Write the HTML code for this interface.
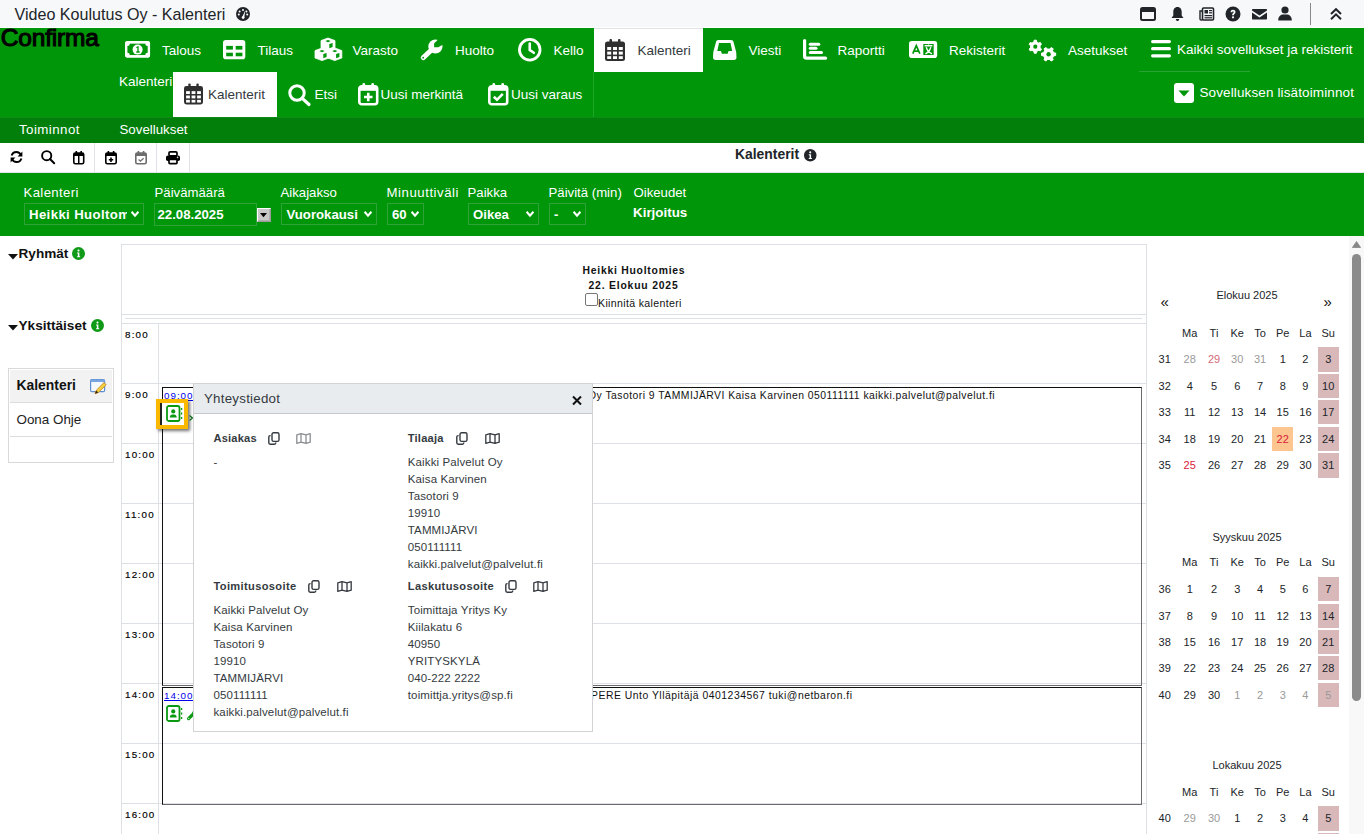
<!DOCTYPE html>
<html><head><meta charset="utf-8">
<style>
*{box-sizing:border-box;margin:0;padding:0}
html,body{width:1364px;height:834px;overflow:hidden;background:#fff;font-family:"Liberation Sans",sans-serif;color:#222;position:relative}
.a{position:absolute;white-space:nowrap}
svg.a{overflow:visible}
</style></head><body>
<div class="a" style="left:0px;top:0px;width:1364px;height:27px;background:#f7f8fa"></div>
<div class="a" style="left:0px;top:27px;width:1364px;height:1px;background:#fff"></div>
<div class="a" style="left:14.50px;top:6.37px;font-size:16.1px;line-height:16.1px;color:#212529;">Video Koulutus Oy - Kalenteri</div>
<svg class="a" style="left:236px;top:7px;" width="14" height="14" viewBox="0 0 14 14"><circle cx="7" cy="7" r="7" fill="#212529"/><circle cx="7" cy="3" r="1" fill="#fff"/><circle cx="3.6" cy="4.6" r="1" fill="#fff"/><circle cx="2.8" cy="7.6" r="1" fill="#fff"/><circle cx="11.2" cy="7.6" r="1" fill="#fff"/><circle cx="10.4" cy="4.6" r="1" fill="#fff"/><path d="M6 10.5 L9.2 3.6 L8.2 11 Z" fill="#fff"/><circle cx="7.1" cy="10.6" r="1.4" fill="#fff"/></svg>
<svg class="a" style="left:1140px;top:7px;" width="16" height="14" viewBox="0 0 16 14"><rect x="1" y="1" width="14" height="12" rx="1.5" fill="none" stroke="#212529" stroke-width="2"/><rect x="1" y="1" width="14" height="4" fill="#212529"/></svg>
<svg class="a" style="left:1171px;top:6px;" width="13" height="16" viewBox="0 0 13 16"><path d="M6.5 1 C3.5 1 2.3 3.5 2.3 6 L2.3 9.5 L0.5 12 L12.5 12 L10.7 9.5 L10.7 6 C10.7 3.5 9.5 1 6.5 1Z" fill="#212529"/><path d="M4.8 13 L8.2 13 C8 14.4 7.3 15 6.5 15 C5.7 15 5 14.4 4.8 13Z" fill="#212529"/></svg>
<svg class="a" style="left:1199px;top:7px;" width="15" height="14" viewBox="0 0 15 14"><rect x="3.5" y="1" width="11" height="12" rx="1" fill="none" stroke="#212529" stroke-width="1.6"/><path d="M3.5 4 L1 4 L1 12 C1 12.8 1.6 13 2.2 13 L3.5 13" fill="none" stroke="#212529" stroke-width="1.4"/><rect x="5.5" y="3" width="3.5" height="3.5" fill="#212529"/><rect x="10" y="3" width="3" height="1.2" fill="#212529"/><rect x="10" y="5.2" width="3" height="1.2" fill="#212529"/><rect x="5.5" y="8" width="7.5" height="1.2" fill="#212529"/><rect x="5.5" y="10.2" width="7.5" height="1.2" fill="#212529"/></svg>
<svg class="a" style="left:1225px;top:6px;" width="16" height="16" viewBox="0 0 16 16"><circle cx="8" cy="8" r="7.5" fill="#212529"/><path d="M5.6 6.2 C5.6 4.6 6.7 3.8 8 3.8 C9.4 3.8 10.5 4.7 10.5 6 C10.5 7.6 8.9 7.8 8.9 9.2 L7.1 9.2 C7.1 7.2 8.6 7.1 8.6 6.1 C8.6 5.6 8.3 5.3 8 5.3 C7.6 5.3 7.3 5.6 7.3 6.2Z" fill="#fff"/><circle cx="8" cy="11.3" r="1.1" fill="#fff"/></svg>
<svg class="a" style="left:1252px;top:8px;" width="15" height="12" viewBox="0 0 15 12"><path d="M1 1 L14 1 C14.6 1 15 1.4 15 2 L15 2.6 L7.5 7.4 L0 2.6 L0 2 C0 1.4 0.4 1 1 1Z" fill="#212529"/><path d="M0 4.6 L7.5 9.4 L15 4.6 L15 10.6 C15 11.2 14.6 11.6 14 11.6 L1 11.6 C0.4 11.6 0 11.2 0 10.6Z" fill="#212529"/></svg>
<svg class="a" style="left:1278px;top:6px;" width="14" height="15" viewBox="0 0 14 15"><circle cx="7" cy="4" r="3.6" fill="#212529"/><path d="M0.2 14.5 C0.2 10.6 2.8 8.6 5.2 8.6 L8.8 8.6 C11.2 8.6 13.8 10.6 13.8 14.5Z" fill="#212529"/></svg>
<div class="a" style="left:1310px;top:3px;width:1px;height:22px;background:#888"></div>
<svg class="a" style="left:1329px;top:7px;" width="14" height="14" viewBox="0 0 14 14"><path d="M2 7 L7 2.2 L12 7 M2 12.2 L7 7.4 L12 12.2" fill="none" stroke="#212529" stroke-width="2"/></svg>
<div class="a" style="left:0px;top:28px;width:1364px;height:89px;background:#009609"></div>
<div class="a" style="left:593px;top:72px;width:1px;height:45px;background:#22a42a"></div>
<div class="a" style="left:1139px;top:71px;width:111px;height:1px;background:#2aa332"></div>
<div class="a" style="left:594px;top:28px;width:109px;height:44px;background:#fff;border-top:1px solid #dfe3e8"></div>
<div class="a" style="left:173px;top:72px;width:104px;height:45px;background:#fff"></div>
<div class="a" style="left:162.00px;top:44.37px;font-size:13.5px;line-height:13.5px;color:#fff;">Talous</div>
<div class="a" style="left:257.50px;top:44.37px;font-size:13.5px;line-height:13.5px;color:#fff;">Tilaus</div>
<div class="a" style="left:352.50px;top:44.37px;font-size:13.5px;line-height:13.5px;color:#fff;">Varasto</div>
<div class="a" style="left:455.00px;top:44.37px;font-size:13.5px;line-height:13.5px;color:#fff;">Huolto</div>
<div class="a" style="left:553.50px;top:44.37px;font-size:13.5px;line-height:13.5px;color:#fff;">Kello</div>
<div class="a" style="left:637.50px;top:44.37px;font-size:13.5px;line-height:13.5px;color:#343a40;">Kalenteri</div>
<div class="a" style="left:748.50px;top:44.37px;font-size:13.5px;line-height:13.5px;color:#fff;">Viesti</div>
<div class="a" style="left:837.50px;top:44.37px;font-size:13.5px;line-height:13.5px;color:#fff;">Raportti</div>
<div class="a" style="left:949.00px;top:44.37px;font-size:13.5px;line-height:13.5px;color:#fff;">Rekisterit</div>
<div class="a" style="left:1068.00px;top:44.37px;font-size:13.5px;line-height:13.5px;color:#fff;">Asetukset</div>
<div class="a" style="left:1177.00px;top:42.57px;font-size:13.5px;line-height:13.5px;color:#fff;">Kaikki sovellukset ja rekisterit</div>
<div class="a" style="left:119.00px;top:74.87px;font-size:13.5px;line-height:13.5px;color:#fff;">Kalenteri</div>
<div class="a" style="left:208.00px;top:87.97px;font-size:13.5px;line-height:13.5px;color:#343a40;">Kalenterit</div>
<div class="a" style="left:314.50px;top:88.17px;font-size:13.5px;line-height:13.5px;color:#fff;">Etsi</div>
<div class="a" style="left:380.50px;top:88.17px;font-size:13.5px;line-height:13.5px;color:#fff;">Uusi merkintä</div>
<div class="a" style="left:511.00px;top:88.17px;font-size:13.5px;line-height:13.5px;color:#fff;">Uusi varaus</div>
<div class="a" style="left:1199.50px;top:86.07px;font-size:13.5px;line-height:13.5px;color:#fff;letter-spacing:0.12px;">Sovelluksen lisätoiminnot</div>
<svg class="a" style="left:124.7px;top:41.1px;" width="25.1" height="16.7" viewBox="0 0 25.1 16.7"><rect x="0" y="0" width="25.1" height="16.7" rx="2.6" fill="#fff"/><rect x="2.4" y="2.65" width="20.3" height="11.4" fill="#009609"/><circle cx="2.4" cy="2.65" r="2.4" fill="#fff"/><circle cx="22.7" cy="2.65" r="2.4" fill="#fff"/><circle cx="2.4" cy="14.05" r="2.4" fill="#fff"/><circle cx="22.7" cy="14.05" r="2.4" fill="#fff"/><circle cx="12.6" cy="8.6" r="5" fill="#fff"/><path d="M11.4 6.6 L13 5.9 L13 11 M11.3 11 L14.7 11" stroke="#009609" stroke-width="1.3" fill="none"/></svg>
<svg class="a" style="left:222.8px;top:40.1px;" width="22.3" height="19.3" viewBox="0 0 22.3 19.3"><rect x="0" y="0" width="22.3" height="19.3" rx="2.8" fill="#fff"/><rect x="3.2" y="5.9" width="6.7" height="3.7" fill="#009609"/><rect x="12.7" y="5.9" width="6.7" height="3.7" fill="#009609"/><rect x="3.2" y="12.7" width="6.7" height="3.6" fill="#009609"/><rect x="12.7" y="12.7" width="6.7" height="3.6" fill="#009609"/></svg>
<svg class="a" style="left:315px;top:38.3px;" width="27" height="23" viewBox="0 0 27 23"><g transform="translate(6,0)"><path d="M0 2.6 L7 0 L14 2.6 L14 10 L7 12.6 L0 10Z" fill="#fff" stroke="#fff" stroke-width="0.8" stroke-linejoin="round"/><path d="M4.3 3.1 L7 2 L9.7 3.1 L7 4.2Z" fill="#009609"/><path d="M8.3 6.1 L11.6 4.9 L11.6 9 L8.3 10.2Z" fill="#009609"/></g><g transform="translate(0,10)"><path d="M0 2.6 L7 0 L14 2.6 L14 10 L7 12.6 L0 10Z" fill="#fff" stroke="#fff" stroke-width="0.8" stroke-linejoin="round"/><path d="M4.3 3.1 L7 2 L9.7 3.1 L7 4.2Z" fill="#009609"/><path d="M8.3 6.1 L11.6 4.9 L11.6 9 L8.3 10.2Z" fill="#009609"/></g><g transform="translate(12.8,10)"><path d="M0 2.6 L7 0 L14 2.6 L14 10 L7 12.6 L0 10Z" fill="#fff" stroke="#fff" stroke-width="0.8" stroke-linejoin="round"/><path d="M4.3 3.1 L7 2 L9.7 3.1 L7 4.2Z" fill="#009609"/><path d="M8.3 6.1 L11.6 4.9 L11.6 9 L8.3 10.2Z" fill="#009609"/></g></svg>
<svg class="a" style="left:420px;top:38.5px;" width="23" height="22" viewBox="0 0 23 22"><circle cx="15.4" cy="7.5" r="7.1" fill="#fff"/><path d="M3.3 18.6 L12.5 10" stroke="#fff" stroke-width="5" stroke-linecap="round"/><path d="M14.1 8.2 L14.1 4.6 L18.8 -0.2 L24 -0.2 L24 5 L18.2 8.2Z" fill="#009609"/><circle cx="3.2" cy="18.7" r="0.9" fill="#009609"/></svg>
<svg class="a" style="left:518px;top:38px;" width="23.5" height="23.5" viewBox="0 0 23.5 23.5"><circle cx="11.75" cy="11.75" r="10.3" fill="none" stroke="#fff" stroke-width="2.8"/><path d="M11.75 5.5 L11.75 12 L15.8 14.8" fill="none" stroke="#fff" stroke-width="2.6" stroke-linecap="round"/></svg>
<svg class="a" style="left:605px;top:39px;preserveAspectRatio:none" width="20" height="22" viewBox="0 0 20 22"><rect x="4.5" y="0" width="2.5" height="4" rx="1" fill="#303030"/><rect x="13" y="0" width="2.5" height="4" rx="1" fill="#303030"/><rect x="0" y="2.5" width="20" height="19.5" rx="2.5" fill="#303030"/><g fill="#fff"><rect x="2.2" y="8" width="4" height="3"/><rect x="8" y="8" width="4" height="3"/><rect x="13.8" y="8" width="4" height="3"/><rect x="2.2" y="12.6" width="4" height="3"/><rect x="8" y="12.6" width="4" height="3"/><rect x="13.8" y="12.6" width="4" height="3"/><rect x="2.2" y="17.2" width="4" height="2.8"/><rect x="8" y="17.2" width="4" height="2.8"/><rect x="13.8" y="17.2" width="4" height="2.8"/></g></svg>
<svg class="a" style="left:184px;top:83px;preserveAspectRatio:none" width="19" height="22" viewBox="0 0 20 22"><rect x="4.5" y="0" width="2.5" height="4" rx="1" fill="#303030"/><rect x="13" y="0" width="2.5" height="4" rx="1" fill="#303030"/><rect x="0" y="2.5" width="20" height="19.5" rx="2.5" fill="#303030"/><g fill="#fff"><rect x="2.2" y="8" width="4" height="3"/><rect x="8" y="8" width="4" height="3"/><rect x="13.8" y="8" width="4" height="3"/><rect x="2.2" y="12.6" width="4" height="3"/><rect x="8" y="12.6" width="4" height="3"/><rect x="13.8" y="12.6" width="4" height="3"/><rect x="2.2" y="17.2" width="4" height="2.8"/><rect x="8" y="17.2" width="4" height="2.8"/><rect x="13.8" y="17.2" width="4" height="2.8"/></g></svg>
<svg class="a" style="left:713px;top:40px;" width="23.5" height="20" viewBox="0 0 23.5 20"><path d="M5.5 0 L18 0 C19.4 0 20.2 0.8 20.5 2 L23.2 12 L23.5 17.5 C23.5 18.9 22.4 20 21 20 L2.5 20 C1.1 20 0 18.9 0 17.5 L0.3 12 L3 2 C3.3 0.8 4.1 0 5.5 0Z" fill="#fff"/><path d="M6 3 L17.5 3 L19.2 11 L15.6 11 L14.6 13.8 L8.9 13.8 L7.9 11 L4.3 11Z" fill="#009609"/></svg>
<svg class="a" style="left:802.5px;top:40px;" width="23" height="20" viewBox="0 0 23 20"><path d="M1.6 0.5 L1.6 16.2 C1.6 17.4 2.4 18.2 3.6 18.2 L22.5 18.2" fill="none" stroke="#fff" stroke-width="3.2" stroke-linecap="round" stroke-linejoin="round"/><rect x="5.8" y="2.8" width="11.5" height="3" rx="1.5" fill="#fff"/><rect x="5.8" y="6.8" width="8.7" height="3" rx="1.5" fill="#fff"/><rect x="5.8" y="11" width="14.2" height="3" rx="1.5" fill="#fff"/></svg>
<svg class="a" style="left:908.5px;top:41px;" width="28.2" height="17" viewBox="0 0 28.2 17"><rect x="0" y="0" width="28.2" height="17" rx="2.8" fill="#fff"/><path d="M3.8 12.6 L7.3 4.6 L10.8 12.6 M5.2 10.2 L9.4 10.2" stroke="#009609" stroke-width="1.7" fill="none"/><rect x="14.3" y="3" width="10.4" height="11" fill="#009609"/><path d="M15.6 4.8 L23.4 4.8 M19.5 3.6 L19.5 5 M21.8 6.2 C21 9.5 19.5 11.5 16.4 12.8 M17.3 6.2 C18 9.5 20 11.5 23 12.8" stroke="#fff" stroke-width="1.4" fill="none"/></svg>
<svg class="a" style="left:1027.5px;top:38.5px;" width="29" height="22" viewBox="0 0 29 22"><path d="M5.86 3.03 L6.18 1.20 L8.42 1.20 L8.74 3.03 L10.62 4.12 L12.38 3.48 L13.49 5.41 L12.06 6.62 L12.06 8.78 L13.49 9.99 L12.38 11.92 L10.62 11.28 L8.74 12.37 L8.42 14.20 L6.18 14.20 L5.86 12.37 L3.98 11.28 L2.22 11.92 L1.11 9.99 L2.54 8.78 L2.54 6.62 L1.11 5.41 L2.22 3.48 L3.98 4.12Z" fill="#fff" stroke="#fff" stroke-width="1" stroke-linejoin="round"/><circle cx="7.3" cy="7.7" r="4.8839999999999995" fill="#fff"/><circle cx="7.3" cy="7.7" r="2.1" fill="#009609"/><path d="M25.69 13.73 L27.70 14.08 L27.70 16.52 L25.69 16.87 L24.51 18.92 L25.20 20.84 L23.09 22.05 L21.78 20.50 L19.42 20.50 L18.11 22.05 L16.00 20.84 L16.69 18.92 L15.51 16.87 L13.50 16.52 L13.50 14.08 L15.51 13.73 L16.69 11.68 L16.00 9.76 L18.11 8.55 L19.42 10.10 L21.78 10.10 L23.09 8.55 L25.20 9.76 L24.51 11.68Z" fill="#fff" stroke="#fff" stroke-width="1" stroke-linejoin="round"/><circle cx="20.6" cy="15.3" r="5.328" fill="#fff"/><circle cx="20.6" cy="15.3" r="2.2" fill="#009609"/></svg>
<svg class="a" style="left:1151px;top:39.5px;" width="20" height="17.5" viewBox="0 0 20 17.5"><rect x="0" y="0" width="20" height="3.2" rx="1.6" fill="#fff"/><rect x="0" y="7.1" width="20" height="3.2" rx="1.6" fill="#fff"/><rect x="0" y="14.2" width="20" height="3.2" rx="1.6" fill="#fff"/></svg>
<svg class="a" style="left:288px;top:83.5px;" width="23" height="21.5" viewBox="0 0 23 21.5"><circle cx="9" cy="9" r="7.2" fill="none" stroke="#fff" stroke-width="3"/><path d="M14.3 14.3 L21 20.5" stroke="#fff" stroke-width="3.2" stroke-linecap="round"/></svg>
<svg class="a" style="left:357.5px;top:82.5px;" width="20.5" height="22.5" viewBox="0 0 20.5 22.5"><rect x="4.5" y="0" width="2.6" height="5" rx="1.2" fill="#fff"/><rect x="13.4" y="0" width="2.6" height="5" rx="1.2" fill="#fff"/><rect x="1.3" y="3.3" width="17.9" height="17.9" rx="2.5" fill="none" stroke="#fff" stroke-width="2.6"/><rect x="1.3" y="3.3" width="17.9" height="4.5" fill="#fff"/><path d="M10.25 9.8 L10.25 18.2 M6 14 L14.5 14" stroke="#fff" stroke-width="2.6"/></svg>
<svg class="a" style="left:487.5px;top:82.5px;" width="20.5" height="22.5" viewBox="0 0 20.5 22.5"><rect x="4.5" y="0" width="2.6" height="5" rx="1.2" fill="#fff"/><rect x="13.4" y="0" width="2.6" height="5" rx="1.2" fill="#fff"/><rect x="1.3" y="3.3" width="17.9" height="17.9" rx="2.5" fill="none" stroke="#fff" stroke-width="2.6"/><rect x="1.3" y="3.3" width="17.9" height="4.5" fill="#fff"/><path d="M5.8 13.8 L9 16.8 L14.8 10.8" stroke="#fff" stroke-width="2.6" fill="none"/></svg>
<svg class="a" style="left:1173.5px;top:83px;" width="20" height="20" viewBox="0 0 20 20"><rect x="0" y="0" width="20" height="20" rx="3" fill="#fff"/><path d="M4.5 7.5 L15.5 7.5 L10 13.5Z" fill="#009609"/></svg>
<div class="a" style="left:0.80px;top:25.96px;font-size:24.5px;line-height:24.5px;color:#000;letter-spacing:-0.2px;-webkit-text-stroke:1.1px #000">Confirma</div>
<div class="a" style="left:0px;top:117px;width:1364px;height:26px;background:#017f0a"></div>
<div class="a" style="left:0px;top:117px;width:1364px;height:1px;background:#0f8a17"></div>
<div class="a" style="left:19.00px;top:123.04px;font-size:13.3px;line-height:13.3px;color:#fff;letter-spacing:0.45px;">Toiminnot</div>
<div class="a" style="left:119.50px;top:123.04px;font-size:13.3px;line-height:13.3px;color:#fff;">Sovellukset</div>
<div class="a" style="left:0px;top:143px;width:1364px;height:30px;background:#fff"></div>
<div class="a" style="left:0px;top:172px;width:1364px;height:1px;background:#e3e6ea"></div>
<div class="a" style="left:94px;top:143px;width:1px;height:29px;background:#dfe3e8"></div>
<div class="a" style="left:156px;top:143px;width:1px;height:29px;background:#dfe3e8"></div>
<div class="a" style="left:189px;top:143px;width:1px;height:29px;background:#dfe3e8"></div>
<svg class="a" style="left:10px;top:151px;" width="13" height="12" viewBox="0 0 13 12"><path d="M11 4.2 C10.2 2.2 8.4 1 6.4 1 C4 1 2.2 2.6 1.6 4.6" fill="none" stroke="#000" stroke-width="1.9"/><path d="M12.4 0.6 L12.4 5.6 L7.6 5.6Z" fill="#000"/><path d="M2 7.8 C2.8 9.8 4.6 11 6.6 11 C9 11 10.8 9.4 11.4 7.4" fill="none" stroke="#000" stroke-width="1.9"/><path d="M0.6 11.4 L0.6 6.4 L5.4 6.4Z" fill="#000"/></svg>
<svg class="a" style="left:41px;top:150px;" width="14" height="14" viewBox="0 0 14 14"><circle cx="5.7" cy="5.7" r="4.6" fill="none" stroke="#000" stroke-width="1.9"/><path d="M9 9 L13.2 13.2" stroke="#000" stroke-width="2" stroke-linecap="round"/></svg>
<svg class="a" style="left:73px;top:150.5px;" width="11.5" height="13.5" viewBox="0 0 11.5 13.5"><rect x="2.5" y="0" width="1.6" height="3" fill="#000"/><rect x="7.4" y="0" width="1.6" height="3" fill="#000"/><rect x="0.8" y="2" width="9.9" height="10.7" rx="1.5" fill="none" stroke="#000" stroke-width="1.6"/><rect x="0.8" y="2" width="9.9" height="3" fill="#000"/><rect x="5" y="4" width="1.5" height="8.5" fill="#000"/></svg>
<svg class="a" style="left:104.5px;top:150.5px;" width="12" height="13.5" viewBox="0 0 12 13.5"><rect x="2.6" y="0" width="1.6" height="3" fill="#000"/><rect x="7.8" y="0" width="1.6" height="3" fill="#000"/><rect x="0.8" y="2" width="10.4" height="10.7" rx="1.5" fill="none" stroke="#000" stroke-width="1.6"/><rect x="0.8" y="2" width="10.4" height="3" fill="#000"/><path d="M6 6.5 L6 11 M3.8 8.8 L8.2 8.8" stroke="#000" stroke-width="1.6"/></svg>
<svg class="a" style="left:134.5px;top:150.5px;" width="12" height="13.5" viewBox="0 0 12 13.5"><rect x="2.6" y="0" width="1.6" height="3" fill="#6c6c6c"/><rect x="7.8" y="0" width="1.6" height="3" fill="#6c6c6c"/><rect x="0.8" y="2" width="10.4" height="10.7" rx="1.5" fill="none" stroke="#6c6c6c" stroke-width="1.6"/><rect x="0.8" y="2" width="10.4" height="3" fill="#6c6c6c"/><path d="M3.6 8.6 L5.4 10.2 L8.6 7.2" stroke="#6c6c6c" stroke-width="1.3" fill="none"/></svg>
<svg class="a" style="left:166px;top:150.5px;" width="14" height="13.5" viewBox="0 0 14 13.5"><rect x="3" y="0.9" width="8" height="4" rx="1.2" fill="none" stroke="#000" stroke-width="1.7"/><rect x="0" y="4.5" width="14" height="5.6" rx="1.8" fill="#000"/><rect x="3" y="8.3" width="8" height="4.3" rx="0.8" fill="#fff" stroke="#000" stroke-width="1.7"/><circle cx="11.6" cy="6.4" r="0.8" fill="#ddd"/></svg>
<div class="a" style="left:735.00px;top:148.43px;font-size:13.9px;line-height:13.9px;color:#212529;font-weight:bold;">Kalenterit</div>
<svg class="a" style="left:803.5px;top:149px;" width="12.5" height="12.5" viewBox="0 0 12 12"><circle cx="6" cy="6" r="6" fill="#212529"/><circle cx="6" cy="3.2" r="1" fill="#fff"/><path d="M4.6 5 L6.8 5 L6.8 8.6 L7.6 8.6 L7.6 9.6 L4.6 9.6 L4.6 8.6 L5.4 8.6 L5.4 6 L4.6 6Z" fill="#fff"/></svg>
<div class="a" style="left:0px;top:173px;width:1364px;height:63px;background:#009609"></div>
<div class="a" style="left:23.50px;top:186.43px;font-size:13.2px;line-height:13.2px;color:#fff;letter-spacing:0.37px;">Kalenteri</div>
<div class="a" style="left:154.50px;top:186.43px;font-size:13.2px;line-height:13.2px;color:#fff;">Päivämäärä</div>
<div class="a" style="left:280.50px;top:186.43px;font-size:13.2px;line-height:13.2px;color:#fff;">Aikajakso</div>
<div class="a" style="left:386.50px;top:186.43px;font-size:13.2px;line-height:13.2px;color:#fff;letter-spacing:0.55px;">Minuuttiväli</div>
<div class="a" style="left:467.50px;top:186.43px;font-size:13.2px;line-height:13.2px;color:#fff;">Paikka</div>
<div class="a" style="left:548.50px;top:186.43px;font-size:13.2px;line-height:13.2px;color:#fff;">Päivitä (min)</div>
<div class="a" style="left:633.50px;top:186.43px;font-size:13.2px;line-height:13.2px;color:#fff;">Oikeudet</div>
<div class="a" style="left:24px;top:203px;width:120px;height:22px;border:1px solid #2fa337"></div>
<div class="a" style="left:29.00px;top:208.33px;font-size:13.2px;line-height:13.2px;color:#fff;font-weight:bold;letter-spacing:0.38px;"><span style="display:inline-block;width:97.5px;overflow:hidden;vertical-align:top">Heikki Huoltomies</span></div>
<svg class="a" style="left:131px;top:210.5px;" width="8" height="6" viewBox="0 0 8 6"><path d="M0.6 0.8 L4 4.6 L7.4 0.8" fill="none" stroke="#fff" stroke-width="2.1"/></svg>
<div class="a" style="left:153.5px;top:203px;width:103px;height:23px;border:1px solid #2fa337"></div>
<div class="a" style="left:157.50px;top:208.33px;font-size:13.2px;line-height:13.2px;color:#fff;font-weight:bold;">22.08.2025</div>
<div class="a" style="left:257px;top:208px;width:14px;height:14px;background:#c8c8c8;border-top:1px solid #fff;border-left:1px solid #fff;border-right:1px solid #9c9c9c;border-bottom:1px solid #9c9c9c;box-shadow:inset -1px -1px 0 #b0b0b0"></div>
<svg class="a" style="left:260px;top:213px;" width="7" height="4.2" viewBox="0 0 7 4.2"><path d="M0 0 L7 0 L3.5 4.2Z" fill="#000"/></svg>
<div class="a" style="left:281px;top:203px;width:96px;height:22px;border:1px solid #2fa337"></div>
<div class="a" style="left:286.50px;top:208.33px;font-size:13.2px;line-height:13.2px;color:#fff;font-weight:bold;">Vuorokausi</div>
<svg class="a" style="left:364px;top:210.5px;" width="8" height="6" viewBox="0 0 8 6"><path d="M0.6 0.8 L4 4.6 L7.4 0.8" fill="none" stroke="#fff" stroke-width="2.1"/></svg>
<div class="a" style="left:387px;top:203px;width:37px;height:22px;border:1px solid #2fa337"></div>
<div class="a" style="left:392.00px;top:208.33px;font-size:13.2px;line-height:13.2px;color:#fff;font-weight:bold;">60</div>
<svg class="a" style="left:411px;top:210.5px;" width="8" height="6" viewBox="0 0 8 6"><path d="M0.6 0.8 L4 4.6 L7.4 0.8" fill="none" stroke="#fff" stroke-width="2.1"/></svg>
<div class="a" style="left:468px;top:203px;width:71px;height:22px;border:1px solid #2fa337"></div>
<div class="a" style="left:473.00px;top:208.33px;font-size:13.2px;line-height:13.2px;color:#fff;font-weight:bold;">Oikea</div>
<svg class="a" style="left:526px;top:210.5px;" width="8" height="6" viewBox="0 0 8 6"><path d="M0.6 0.8 L4 4.6 L7.4 0.8" fill="none" stroke="#fff" stroke-width="2.1"/></svg>
<div class="a" style="left:549px;top:203px;width:37px;height:22px;border:1px solid #2fa337"></div>
<div class="a" style="left:554.00px;top:208.33px;font-size:13.2px;line-height:13.2px;color:#fff;font-weight:bold;">-</div>
<svg class="a" style="left:573px;top:210.5px;" width="8" height="6" viewBox="0 0 8 6"><path d="M0.6 0.8 L4 4.6 L7.4 0.8" fill="none" stroke="#fff" stroke-width="2.1"/></svg>
<div class="a" style="left:633.00px;top:206.26px;font-size:13.4px;line-height:13.4px;color:#fff;font-weight:bold;">Kirjoitus</div>
<svg class="a" style="left:8px;top:254px;" width="10" height="5.5" viewBox="0 0 10 5.5"><path d="M0 0 L10 0 L5 5.5Z" fill="#111"/></svg>
<div class="a" style="left:18.50px;top:246.79px;font-size:13.6px;line-height:13.6px;color:#111;font-weight:bold;">Ryhmät</div>
<svg class="a" style="left:71.7px;top:246.6px;" width="13" height="13" viewBox="0 0 12 12"><circle cx="6" cy="6" r="6" fill="#119a18"/><circle cx="6" cy="3.3" r="0.95" fill="#fff"/><path d="M4.7 5 L6.8 5 L6.8 8.6 L7.5 8.6 L7.5 9.5 L4.7 9.5 L4.7 8.6 L5.4 8.6 L5.4 5.9 L4.7 5.9Z" fill="#fff"/></svg>
<svg class="a" style="left:8px;top:325px;" width="10" height="5.5" viewBox="0 0 10 5.5"><path d="M0 0 L10 0 L5 5.5Z" fill="#111"/></svg>
<div class="a" style="left:18.50px;top:318.59px;font-size:13.6px;line-height:13.6px;color:#111;font-weight:bold;">Yksittäiset</div>
<svg class="a" style="left:90.5px;top:318.6px;" width="13" height="13" viewBox="0 0 12 12"><circle cx="6" cy="6" r="6" fill="#119a18"/><circle cx="6" cy="3.3" r="0.95" fill="#fff"/><path d="M4.7 5 L6.8 5 L6.8 8.6 L7.5 8.6 L7.5 9.5 L4.7 9.5 L4.7 8.6 L5.4 8.6 L5.4 5.9 L4.7 5.9Z" fill="#fff"/></svg>
<div class="a" style="left:8px;top:368px;width:106px;height:95px;border:1px solid #d9d9d9;background:#fff"></div>
<div class="a" style="left:10px;top:370px;width:102px;height:33px;background:#f2f2f2;border-bottom:1px solid #dcdcdc"></div>
<div class="a" style="left:10px;top:435.5px;width:102px;height:1px;background:#dcdcdc"></div>
<div class="a" style="left:16.50px;top:378.73px;font-size:13.9px;line-height:13.9px;color:#111;font-weight:bold;">Kalenteri</div>
<div class="a" style="left:16.50px;top:413.16px;font-size:13.4px;line-height:13.4px;color:#222;">Oona Ohje</div>
<svg class="a" style="left:90px;top:379px;" width="17" height="16" viewBox="0 0 17 16"><rect x="0.6" y="0.6" width="14" height="12" rx="1.2" fill="#f6f9fd" stroke="#5f8fd3" stroke-width="1.2"/><rect x="0.6" y="0.6" width="14" height="2.4" fill="#79a5e0"/><path d="M5 14.8 L6.2 11.4 L14 3.6 L16.2 5.8 L8.4 13.6Z" fill="#f2cf3c" stroke="#c98a2a" stroke-width="0.9"/><path d="M5 14.8 L6.2 11.4 L8.4 13.6Z" fill="#3a2a10"/></svg>
<div class="a" style="left:121px;top:244px;width:1026px;height:600px;border:1px solid #dde1e6;background:#fff"></div>
<div class="a" style="left:582.50px;top:265.70px;font-size:10.4px;line-height:10.4px;color:#111;font-weight:bold;letter-spacing:0.75px;">Heikki Huoltomies</div>
<div class="a" style="left:588.50px;top:280.70px;font-size:10.4px;line-height:10.4px;color:#111;font-weight:bold;letter-spacing:0.8px;">22. Elokuu 2025</div>
<div class="a" style="left:585px;top:293px;width:13px;height:13px;border:1px solid #767676;border-radius:2px;background:#fff"></div>
<div class="a" style="left:598.00px;top:297.53px;font-size:10.6px;line-height:10.6px;color:#111;letter-spacing:0.33px;">Kiinnitä kalenteri</div>
<div class="a" style="left:121px;top:314px;width:1026px;height:1px;background:#dde1e6"></div>
<div class="a" style="left:125px;top:318px;width:1017px;height:1px;background:#dde1e6"></div>
<div class="a" style="left:121px;top:323px;width:1026px;height:1px;background:#dde1e6"></div>
<div class="a" style="left:158px;top:323px;width:1px;height:520px;background:#dde1e6"></div>
<div class="a" style="left:125.00px;top:330.30px;font-size:9.8px;line-height:9.8px;color:#000;letter-spacing:1.2px;-webkit-text-stroke:0.15px #000">8:00</div>
<div class="a" style="left:121px;top:383px;width:1026px;height:1px;background:#dde1e6"></div>
<div class="a" style="left:125.00px;top:390.30px;font-size:9.8px;line-height:9.8px;color:#000;letter-spacing:1.2px;-webkit-text-stroke:0.15px #000">9:00</div>
<div class="a" style="left:121px;top:443px;width:1026px;height:1px;background:#dde1e6"></div>
<div class="a" style="left:125.00px;top:450.30px;font-size:9.8px;line-height:9.8px;color:#000;letter-spacing:1.2px;-webkit-text-stroke:0.15px #000">10:00</div>
<div class="a" style="left:121px;top:503px;width:1026px;height:1px;background:#dde1e6"></div>
<div class="a" style="left:125.00px;top:510.30px;font-size:9.8px;line-height:9.8px;color:#000;letter-spacing:1.2px;-webkit-text-stroke:0.15px #000">11:00</div>
<div class="a" style="left:121px;top:563px;width:1026px;height:1px;background:#dde1e6"></div>
<div class="a" style="left:125.00px;top:570.30px;font-size:9.8px;line-height:9.8px;color:#000;letter-spacing:1.2px;-webkit-text-stroke:0.15px #000">12:00</div>
<div class="a" style="left:121px;top:623px;width:1026px;height:1px;background:#dde1e6"></div>
<div class="a" style="left:125.00px;top:630.30px;font-size:9.8px;line-height:9.8px;color:#000;letter-spacing:1.2px;-webkit-text-stroke:0.15px #000">13:00</div>
<div class="a" style="left:121px;top:683px;width:1026px;height:1px;background:#dde1e6"></div>
<div class="a" style="left:125.00px;top:690.30px;font-size:9.8px;line-height:9.8px;color:#000;letter-spacing:1.2px;-webkit-text-stroke:0.15px #000">14:00</div>
<div class="a" style="left:121px;top:743px;width:1026px;height:1px;background:#dde1e6"></div>
<div class="a" style="left:125.00px;top:750.30px;font-size:9.8px;line-height:9.8px;color:#000;letter-spacing:1.2px;-webkit-text-stroke:0.15px #000">15:00</div>
<div class="a" style="left:121px;top:803px;width:1026px;height:1px;background:#dde1e6"></div>
<div class="a" style="left:125.00px;top:810.30px;font-size:9.8px;line-height:9.8px;color:#000;letter-spacing:1.2px;-webkit-text-stroke:0.15px #000">16:00</div>
<div class="a" style="left:162px;top:387px;width:980px;height:299px;border:1px solid #6b6b6b;border-top-color:#111;border-left-color:#111"></div>
<div class="a" style="left:162px;top:687px;width:980px;height:118px;border:1px solid #6b6b6b;border-top-color:#111;border-left-color:#111"></div>
<div class="a" style="left:164.00px;top:390.90px;font-size:9.8px;line-height:9.8px;color:#0000ee;letter-spacing:1.0px;"><span style="text-decoration:underline">09:00</span></div>
<div class="a" style="left:164.00px;top:691.00px;font-size:9.8px;line-height:9.8px;color:#0000ee;letter-spacing:1.0px;"><span style="text-decoration:underline">14:00</span></div>
<div class="a" style="left:995.00px;top:390.70px;font-size:10.4px;line-height:10.4px;color:#111;letter-spacing:0.46px;transform:translateX(-100%)">Kaikki Palvelut Oy Tasotori 9 TAMMIJÄRVI Kaisa Karvinen 050111111 kaikki.palvelut@palvelut.fi</div>
<div class="a" style="left:852.50px;top:690.70px;font-size:10.4px;line-height:10.4px;color:#111;letter-spacing:0.5px;transform:translateX(-100%)">Tampereen katu 1 33100 TAMPERE Unto Ylläpitäjä 0401234567 tuki@netbaron.fi</div>
<svg class="a" style="left:186px;top:706px;" width="10" height="16" viewBox="0 0 10 16"><path d="M2.6 12.6 L7.6 7.6" stroke="#0a9a12" stroke-width="3.3" stroke-linecap="round"/><path d="M6.4 6.6 L7.8 2.2 L8 9 Z" fill="#0a9a12"/><circle cx="2.8" cy="12.4" r="0.6" fill="#fff"/></svg>
<svg class="a" style="left:166px;top:705px;" width="17" height="17" viewBox="0 0 17 17"><rect x="1" y="1" width="12.5" height="15" rx="1.8" fill="#fff" stroke="#0a9a12" stroke-width="1.8"/><circle cx="7.25" cy="6.4" r="2.1" fill="#0a9a12"/><path d="M3.8 12.6 C3.8 10.4 5.2 9.6 6.2 9.6 L8.3 9.6 C9.3 9.6 10.7 10.4 10.7 12.6Z" fill="#0a9a12"/><path d="M15.6 3 L15.6 5 M15.6 7.5 L15.6 9.5 M15.6 12 L15.6 14" stroke="#0a9a12" stroke-width="1.3"/></svg>
<div class="a" style="left:156px;top:399px;width:32px;height:30px;border:4px solid #fbb800;background:#fff;box-shadow:2px 2px 3px rgba(0,0,0,0.55)"></div>
<div class="a" style="left:160px;top:403px;width:2px;height:22px;background:#222"></div>
<svg class="a" style="left:166px;top:405px;" width="17" height="17" viewBox="0 0 17 17"><rect x="1" y="1" width="12.5" height="15" rx="1.8" fill="#fff" stroke="#0a9a12" stroke-width="1.8"/><circle cx="7.25" cy="6.4" r="2.1" fill="#0a9a12"/><path d="M3.8 12.6 C3.8 10.4 5.2 9.6 6.2 9.6 L8.3 9.6 C9.3 9.6 10.7 10.4 10.7 12.6Z" fill="#0a9a12"/><path d="M15.6 3 L15.6 5 M15.6 7.5 L15.6 9.5 M15.6 12 L15.6 14" stroke="#0a9a12" stroke-width="1.3"/></svg>
<svg class="a" style="left:189px;top:415px;" width="4" height="6" viewBox="0 0 4 6"><path d="M0.5 0.5 L3.5 3 L0.5 5.5" fill="none" stroke="#0a6a12" stroke-width="1.2"/></svg>
<div class="a" style="left:193px;top:383px;width:400px;height:349px;background:#fff;border:1px solid #d3d3d3"></div>
<div class="a" style="left:194px;top:384px;width:398px;height:30px;background:#e9ecef;border-bottom:1px solid #c4c8cc"></div>
<div class="a" style="left:204.00px;top:391.74px;font-size:13.3px;line-height:13.3px;color:#343a40;letter-spacing:0.25px;">Yhteystiedot</div>
<svg class="a" style="left:572px;top:396px;" width="10" height="9" viewBox="0 0 10 9"><path d="M1 0.5 L9 8.5 M9 0.5 L1 8.5" stroke="#111" stroke-width="2"/></svg>
<div class="a" style="left:213.50px;top:432.90px;font-size:11.1px;line-height:11.1px;color:#343a40;font-weight:bold;letter-spacing:0.2px;">Asiakas</div>
<svg class="a" style="left:268px;top:432px;" width="12" height="13" viewBox="0 0 12 13"><rect x="4" y="0.8" width="7" height="8.6" rx="1.6" fill="none" stroke="#343a40" stroke-width="1.4"/><path d="M2.6 3.6 L2.2 3.6 C1.4 3.6 0.8 4.2 0.8 5 L0.8 10.8 C0.8 11.6 1.4 12.2 2.2 12.2 L6.4 12.2 C7.2 12.2 7.8 11.6 7.8 10.8 L7.8 10.6" fill="none" stroke="#343a40" stroke-width="1.4"/></svg>
<svg class="a" style="left:296px;top:433px;" width="15" height="11" viewBox="0 0 15 11"><path d="M0.8 1.8 L5 0.7 L10 1.8 L14.2 0.7 L14.2 9.2 L10 10.3 L5 9.2 L0.8 10.3Z M5 0.7 L5 9.2 M10 1.8 L10 10.3" fill="none" stroke="#8a8f94" stroke-width="1.3" stroke-linejoin="round"/></svg>
<div class="a" style="left:407.80px;top:432.90px;font-size:11.1px;line-height:11.1px;color:#343a40;font-weight:bold;letter-spacing:0.2px;">Tilaaja</div>
<svg class="a" style="left:456px;top:432px;" width="12" height="13" viewBox="0 0 12 13"><rect x="4" y="0.8" width="7" height="8.6" rx="1.6" fill="none" stroke="#343a40" stroke-width="1.4"/><path d="M2.6 3.6 L2.2 3.6 C1.4 3.6 0.8 4.2 0.8 5 L0.8 10.8 C0.8 11.6 1.4 12.2 2.2 12.2 L6.4 12.2 C7.2 12.2 7.8 11.6 7.8 10.8 L7.8 10.6" fill="none" stroke="#343a40" stroke-width="1.4"/></svg>
<svg class="a" style="left:484.5px;top:433px;" width="15" height="11" viewBox="0 0 15 11"><path d="M0.8 1.8 L5 0.7 L10 1.8 L14.2 0.7 L14.2 9.2 L10 10.3 L5 9.2 L0.8 10.3Z M5 0.7 L5 9.2 M10 1.8 L10 10.3" fill="none" stroke="#343a40" stroke-width="1.3" stroke-linejoin="round"/></svg>
<div class="a" style="left:213.50px;top:456.57px;font-size:11.5px;line-height:11.5px;color:#343a40;letter-spacing:0.12px;">-</div>
<div class="a" style="left:407.80px;top:456.57px;font-size:11.5px;line-height:11.5px;color:#343a40;letter-spacing:0.12px;">Kaikki Palvelut Oy</div>
<div class="a" style="left:407.80px;top:473.57px;font-size:11.5px;line-height:11.5px;color:#343a40;letter-spacing:0.12px;">Kaisa Karvinen</div>
<div class="a" style="left:407.80px;top:490.57px;font-size:11.5px;line-height:11.5px;color:#343a40;letter-spacing:0.12px;">Tasotori 9</div>
<div class="a" style="left:407.80px;top:507.57px;font-size:11.5px;line-height:11.5px;color:#343a40;letter-spacing:0.12px;">19910</div>
<div class="a" style="left:407.80px;top:524.57px;font-size:11.5px;line-height:11.5px;color:#343a40;letter-spacing:0.12px;">TAMMIJÄRVI</div>
<div class="a" style="left:407.80px;top:541.57px;font-size:11.5px;line-height:11.5px;color:#343a40;letter-spacing:0.12px;">050111111</div>
<div class="a" style="left:407.80px;top:558.57px;font-size:11.5px;line-height:11.5px;color:#343a40;letter-spacing:0.12px;">kaikki.palvelut@palvelut.fi</div>
<div class="a" style="left:213.50px;top:580.90px;font-size:11.1px;line-height:11.1px;color:#343a40;font-weight:bold;letter-spacing:0.35px;">Toimitusosoite</div>
<svg class="a" style="left:308px;top:580px;" width="12" height="13" viewBox="0 0 12 13"><rect x="4" y="0.8" width="7" height="8.6" rx="1.6" fill="none" stroke="#343a40" stroke-width="1.4"/><path d="M2.6 3.6 L2.2 3.6 C1.4 3.6 0.8 4.2 0.8 5 L0.8 10.8 C0.8 11.6 1.4 12.2 2.2 12.2 L6.4 12.2 C7.2 12.2 7.8 11.6 7.8 10.8 L7.8 10.6" fill="none" stroke="#343a40" stroke-width="1.4"/></svg>
<svg class="a" style="left:336.5px;top:581px;" width="15" height="11" viewBox="0 0 15 11"><path d="M0.8 1.8 L5 0.7 L10 1.8 L14.2 0.7 L14.2 9.2 L10 10.3 L5 9.2 L0.8 10.3Z M5 0.7 L5 9.2 M10 1.8 L10 10.3" fill="none" stroke="#343a40" stroke-width="1.3" stroke-linejoin="round"/></svg>
<div class="a" style="left:407.80px;top:580.90px;font-size:11.1px;line-height:11.1px;color:#343a40;font-weight:bold;letter-spacing:0.35px;">Laskutusosoite</div>
<svg class="a" style="left:504.5px;top:580px;" width="12" height="13" viewBox="0 0 12 13"><rect x="4" y="0.8" width="7" height="8.6" rx="1.6" fill="none" stroke="#343a40" stroke-width="1.4"/><path d="M2.6 3.6 L2.2 3.6 C1.4 3.6 0.8 4.2 0.8 5 L0.8 10.8 C0.8 11.6 1.4 12.2 2.2 12.2 L6.4 12.2 C7.2 12.2 7.8 11.6 7.8 10.8 L7.8 10.6" fill="none" stroke="#343a40" stroke-width="1.4"/></svg>
<svg class="a" style="left:533px;top:581px;" width="15" height="11" viewBox="0 0 15 11"><path d="M0.8 1.8 L5 0.7 L10 1.8 L14.2 0.7 L14.2 9.2 L10 10.3 L5 9.2 L0.8 10.3Z M5 0.7 L5 9.2 M10 1.8 L10 10.3" fill="none" stroke="#343a40" stroke-width="1.3" stroke-linejoin="round"/></svg>
<div class="a" style="left:213.50px;top:605.07px;font-size:11.5px;line-height:11.5px;color:#343a40;letter-spacing:0.12px;">Kaikki Palvelut Oy</div>
<div class="a" style="left:213.50px;top:622.07px;font-size:11.5px;line-height:11.5px;color:#343a40;letter-spacing:0.12px;">Kaisa Karvinen</div>
<div class="a" style="left:213.50px;top:639.07px;font-size:11.5px;line-height:11.5px;color:#343a40;letter-spacing:0.12px;">Tasotori 9</div>
<div class="a" style="left:213.50px;top:656.07px;font-size:11.5px;line-height:11.5px;color:#343a40;letter-spacing:0.12px;">19910</div>
<div class="a" style="left:213.50px;top:673.07px;font-size:11.5px;line-height:11.5px;color:#343a40;letter-spacing:0.12px;">TAMMIJÄRVI</div>
<div class="a" style="left:213.50px;top:690.07px;font-size:11.5px;line-height:11.5px;color:#343a40;letter-spacing:0.12px;">050111111</div>
<div class="a" style="left:213.50px;top:707.07px;font-size:11.5px;line-height:11.5px;color:#343a40;letter-spacing:0.12px;">kaikki.palvelut@palvelut.fi</div>
<div class="a" style="left:407.80px;top:605.07px;font-size:11.5px;line-height:11.5px;color:#343a40;letter-spacing:0.12px;">Toimittaja Yritys Ky</div>
<div class="a" style="left:407.80px;top:622.07px;font-size:11.5px;line-height:11.5px;color:#343a40;letter-spacing:0.12px;">Kiilakatu 6</div>
<div class="a" style="left:407.80px;top:639.07px;font-size:11.5px;line-height:11.5px;color:#343a40;letter-spacing:0.12px;">40950</div>
<div class="a" style="left:407.80px;top:656.07px;font-size:11.5px;line-height:11.5px;color:#343a40;letter-spacing:0.12px;">YRITYSKYLÄ</div>
<div class="a" style="left:407.80px;top:673.07px;font-size:11.5px;line-height:11.5px;color:#343a40;letter-spacing:0.12px;">040-222 2222</div>
<div class="a" style="left:407.80px;top:690.07px;font-size:11.5px;line-height:11.5px;color:#343a40;letter-spacing:0.12px;">toimittja.yritys@sp.fi</div>
<div class="a" style="left:1272px;top:427px;width:21px;height:23.6px;background:#fdc690"></div>
<div class="a" style="left:1247.00px;top:290.29px;font-size:11px;line-height:11px;color:#212529;transform:translateX(-50%)">Elokuu 2025</div>
<div class="a" style="left:1160.50px;top:294.30px;font-size:15px;line-height:15px;color:#111;">«</div>
<div class="a" style="left:1323.50px;top:294.30px;font-size:15px;line-height:15px;color:#111;">»</div>
<div class="a" style="left:1189.70px;top:327.89px;font-size:11px;line-height:11px;color:#212529;transform:translateX(-50%)">Ma</div>
<div class="a" style="left:1214.00px;top:327.89px;font-size:11px;line-height:11px;color:#212529;transform:translateX(-50%)">Ti</div>
<div class="a" style="left:1237.20px;top:327.89px;font-size:11px;line-height:11px;color:#212529;transform:translateX(-50%)">Ke</div>
<div class="a" style="left:1260.00px;top:327.89px;font-size:11px;line-height:11px;color:#212529;transform:translateX(-50%)">To</div>
<div class="a" style="left:1282.70px;top:327.89px;font-size:11px;line-height:11px;color:#212529;transform:translateX(-50%)">Pe</div>
<div class="a" style="left:1305.40px;top:327.89px;font-size:11px;line-height:11px;color:#212529;transform:translateX(-50%)">La</div>
<div class="a" style="left:1328.20px;top:327.89px;font-size:11px;line-height:11px;color:#212529;transform:translateX(-50%)">Su</div>
<div class="a" style="left:1318px;top:347px;width:21px;height:24.600000000000023px;background:#d8b8b9"></div>
<div class="a" style="left:1164.70px;top:353.99px;font-size:11px;line-height:11px;color:#212529;transform:translateX(-50%)">31</div>
<div class="a" style="left:1189.70px;top:353.99px;font-size:11px;line-height:11px;color:#9a9a9a;transform:translateX(-50%)">28</div>
<div class="a" style="left:1214.00px;top:353.99px;font-size:11px;line-height:11px;color:#d46a78;transform:translateX(-50%)">29</div>
<div class="a" style="left:1237.20px;top:353.99px;font-size:11px;line-height:11px;color:#9a9a9a;transform:translateX(-50%)">30</div>
<div class="a" style="left:1260.00px;top:353.99px;font-size:11px;line-height:11px;color:#9a9a9a;transform:translateX(-50%)">31</div>
<div class="a" style="left:1282.70px;top:353.99px;font-size:11px;line-height:11px;color:#212529;transform:translateX(-50%)">1</div>
<div class="a" style="left:1305.40px;top:353.99px;font-size:11px;line-height:11px;color:#212529;transform:translateX(-50%)">2</div>
<div class="a" style="left:1328.20px;top:353.99px;font-size:11px;line-height:11px;color:#212529;transform:translateX(-50%)">3</div>
<div class="a" style="left:1318px;top:374px;width:21px;height:23.600000000000023px;background:#d8b8b9"></div>
<div class="a" style="left:1164.70px;top:380.99px;font-size:11px;line-height:11px;color:#212529;transform:translateX(-50%)">32</div>
<div class="a" style="left:1189.70px;top:380.99px;font-size:11px;line-height:11px;color:#212529;transform:translateX(-50%)">4</div>
<div class="a" style="left:1214.00px;top:380.99px;font-size:11px;line-height:11px;color:#212529;transform:translateX(-50%)">5</div>
<div class="a" style="left:1237.20px;top:380.99px;font-size:11px;line-height:11px;color:#212529;transform:translateX(-50%)">6</div>
<div class="a" style="left:1260.00px;top:380.99px;font-size:11px;line-height:11px;color:#212529;transform:translateX(-50%)">7</div>
<div class="a" style="left:1282.70px;top:380.99px;font-size:11px;line-height:11px;color:#212529;transform:translateX(-50%)">8</div>
<div class="a" style="left:1305.40px;top:380.99px;font-size:11px;line-height:11px;color:#212529;transform:translateX(-50%)">9</div>
<div class="a" style="left:1328.20px;top:380.99px;font-size:11px;line-height:11px;color:#212529;transform:translateX(-50%)">10</div>
<div class="a" style="left:1318px;top:400.2px;width:21px;height:24.30000000000001px;background:#d8b8b9"></div>
<div class="a" style="left:1164.70px;top:406.89px;font-size:11px;line-height:11px;color:#212529;transform:translateX(-50%)">33</div>
<div class="a" style="left:1189.70px;top:406.89px;font-size:11px;line-height:11px;color:#212529;transform:translateX(-50%)">11</div>
<div class="a" style="left:1214.00px;top:406.89px;font-size:11px;line-height:11px;color:#212529;transform:translateX(-50%)">12</div>
<div class="a" style="left:1237.20px;top:406.89px;font-size:11px;line-height:11px;color:#212529;transform:translateX(-50%)">13</div>
<div class="a" style="left:1260.00px;top:406.89px;font-size:11px;line-height:11px;color:#212529;transform:translateX(-50%)">14</div>
<div class="a" style="left:1282.70px;top:406.89px;font-size:11px;line-height:11px;color:#212529;transform:translateX(-50%)">15</div>
<div class="a" style="left:1305.40px;top:406.89px;font-size:11px;line-height:11px;color:#212529;transform:translateX(-50%)">16</div>
<div class="a" style="left:1328.20px;top:406.89px;font-size:11px;line-height:11px;color:#212529;transform:translateX(-50%)">17</div>
<div class="a" style="left:1318px;top:427px;width:21px;height:23.600000000000023px;background:#d8b8b9"></div>
<div class="a" style="left:1164.70px;top:433.79px;font-size:11px;line-height:11px;color:#212529;transform:translateX(-50%)">34</div>
<div class="a" style="left:1189.70px;top:433.79px;font-size:11px;line-height:11px;color:#212529;transform:translateX(-50%)">18</div>
<div class="a" style="left:1214.00px;top:433.79px;font-size:11px;line-height:11px;color:#212529;transform:translateX(-50%)">19</div>
<div class="a" style="left:1237.20px;top:433.79px;font-size:11px;line-height:11px;color:#212529;transform:translateX(-50%)">20</div>
<div class="a" style="left:1260.00px;top:433.79px;font-size:11px;line-height:11px;color:#212529;transform:translateX(-50%)">21</div>
<div class="a" style="left:1282.70px;top:433.79px;font-size:11px;line-height:11px;color:#d81b3c;transform:translateX(-50%)">22</div>
<div class="a" style="left:1305.40px;top:433.79px;font-size:11px;line-height:11px;color:#212529;transform:translateX(-50%)">23</div>
<div class="a" style="left:1328.20px;top:433.79px;font-size:11px;line-height:11px;color:#212529;transform:translateX(-50%)">24</div>
<div class="a" style="left:1318px;top:453px;width:21px;height:24.80000000000001px;background:#d8b8b9"></div>
<div class="a" style="left:1164.70px;top:459.69px;font-size:11px;line-height:11px;color:#212529;transform:translateX(-50%)">35</div>
<div class="a" style="left:1189.70px;top:459.69px;font-size:11px;line-height:11px;color:#d81b3c;transform:translateX(-50%)">25</div>
<div class="a" style="left:1214.00px;top:459.69px;font-size:11px;line-height:11px;color:#212529;transform:translateX(-50%)">26</div>
<div class="a" style="left:1237.20px;top:459.69px;font-size:11px;line-height:11px;color:#212529;transform:translateX(-50%)">27</div>
<div class="a" style="left:1260.00px;top:459.69px;font-size:11px;line-height:11px;color:#212529;transform:translateX(-50%)">28</div>
<div class="a" style="left:1282.70px;top:459.69px;font-size:11px;line-height:11px;color:#212529;transform:translateX(-50%)">29</div>
<div class="a" style="left:1305.40px;top:459.69px;font-size:11px;line-height:11px;color:#212529;transform:translateX(-50%)">30</div>
<div class="a" style="left:1328.20px;top:459.69px;font-size:11px;line-height:11px;color:#212529;transform:translateX(-50%)">31</div>
<div class="a" style="left:1247.00px;top:531.59px;font-size:11px;line-height:11px;color:#212529;transform:translateX(-50%)">Syyskuu 2025</div>
<div class="a" style="left:1189.70px;top:557.29px;font-size:11px;line-height:11px;color:#212529;transform:translateX(-50%)">Ma</div>
<div class="a" style="left:1214.00px;top:557.29px;font-size:11px;line-height:11px;color:#212529;transform:translateX(-50%)">Ti</div>
<div class="a" style="left:1237.20px;top:557.29px;font-size:11px;line-height:11px;color:#212529;transform:translateX(-50%)">Ke</div>
<div class="a" style="left:1260.00px;top:557.29px;font-size:11px;line-height:11px;color:#212529;transform:translateX(-50%)">To</div>
<div class="a" style="left:1282.70px;top:557.29px;font-size:11px;line-height:11px;color:#212529;transform:translateX(-50%)">Pe</div>
<div class="a" style="left:1305.40px;top:557.29px;font-size:11px;line-height:11px;color:#212529;transform:translateX(-50%)">La</div>
<div class="a" style="left:1328.20px;top:557.29px;font-size:11px;line-height:11px;color:#212529;transform:translateX(-50%)">Su</div>
<div class="a" style="left:1318px;top:577px;width:21px;height:23.5px;background:#d8b8b9"></div>
<div class="a" style="left:1164.70px;top:584.39px;font-size:11px;line-height:11px;color:#212529;transform:translateX(-50%)">36</div>
<div class="a" style="left:1189.70px;top:584.39px;font-size:11px;line-height:11px;color:#212529;transform:translateX(-50%)">1</div>
<div class="a" style="left:1214.00px;top:584.39px;font-size:11px;line-height:11px;color:#212529;transform:translateX(-50%)">2</div>
<div class="a" style="left:1237.20px;top:584.39px;font-size:11px;line-height:11px;color:#212529;transform:translateX(-50%)">3</div>
<div class="a" style="left:1260.00px;top:584.39px;font-size:11px;line-height:11px;color:#212529;transform:translateX(-50%)">4</div>
<div class="a" style="left:1282.70px;top:584.39px;font-size:11px;line-height:11px;color:#212529;transform:translateX(-50%)">5</div>
<div class="a" style="left:1305.40px;top:584.39px;font-size:11px;line-height:11px;color:#212529;transform:translateX(-50%)">6</div>
<div class="a" style="left:1328.20px;top:584.39px;font-size:11px;line-height:11px;color:#212529;transform:translateX(-50%)">7</div>
<div class="a" style="left:1318px;top:603.5px;width:21px;height:24.0px;background:#d8b8b9"></div>
<div class="a" style="left:1164.70px;top:610.69px;font-size:11px;line-height:11px;color:#212529;transform:translateX(-50%)">37</div>
<div class="a" style="left:1189.70px;top:610.69px;font-size:11px;line-height:11px;color:#212529;transform:translateX(-50%)">8</div>
<div class="a" style="left:1214.00px;top:610.69px;font-size:11px;line-height:11px;color:#212529;transform:translateX(-50%)">9</div>
<div class="a" style="left:1237.20px;top:610.69px;font-size:11px;line-height:11px;color:#212529;transform:translateX(-50%)">10</div>
<div class="a" style="left:1260.00px;top:610.69px;font-size:11px;line-height:11px;color:#212529;transform:translateX(-50%)">11</div>
<div class="a" style="left:1282.70px;top:610.69px;font-size:11px;line-height:11px;color:#212529;transform:translateX(-50%)">12</div>
<div class="a" style="left:1305.40px;top:610.69px;font-size:11px;line-height:11px;color:#212529;transform:translateX(-50%)">13</div>
<div class="a" style="left:1328.20px;top:610.69px;font-size:11px;line-height:11px;color:#212529;transform:translateX(-50%)">14</div>
<div class="a" style="left:1318px;top:630.3px;width:21px;height:23.40000000000009px;background:#d8b8b9"></div>
<div class="a" style="left:1164.70px;top:637.19px;font-size:11px;line-height:11px;color:#212529;transform:translateX(-50%)">38</div>
<div class="a" style="left:1189.70px;top:637.19px;font-size:11px;line-height:11px;color:#212529;transform:translateX(-50%)">15</div>
<div class="a" style="left:1214.00px;top:637.19px;font-size:11px;line-height:11px;color:#212529;transform:translateX(-50%)">16</div>
<div class="a" style="left:1237.20px;top:637.19px;font-size:11px;line-height:11px;color:#212529;transform:translateX(-50%)">17</div>
<div class="a" style="left:1260.00px;top:637.19px;font-size:11px;line-height:11px;color:#212529;transform:translateX(-50%)">18</div>
<div class="a" style="left:1282.70px;top:637.19px;font-size:11px;line-height:11px;color:#212529;transform:translateX(-50%)">19</div>
<div class="a" style="left:1305.40px;top:637.19px;font-size:11px;line-height:11px;color:#212529;transform:translateX(-50%)">20</div>
<div class="a" style="left:1328.20px;top:637.19px;font-size:11px;line-height:11px;color:#212529;transform:translateX(-50%)">21</div>
<div class="a" style="left:1318px;top:656.3px;width:21px;height:24.0px;background:#d8b8b9"></div>
<div class="a" style="left:1164.70px;top:663.19px;font-size:11px;line-height:11px;color:#212529;transform:translateX(-50%)">39</div>
<div class="a" style="left:1189.70px;top:663.19px;font-size:11px;line-height:11px;color:#212529;transform:translateX(-50%)">22</div>
<div class="a" style="left:1214.00px;top:663.19px;font-size:11px;line-height:11px;color:#212529;transform:translateX(-50%)">23</div>
<div class="a" style="left:1237.20px;top:663.19px;font-size:11px;line-height:11px;color:#212529;transform:translateX(-50%)">24</div>
<div class="a" style="left:1260.00px;top:663.19px;font-size:11px;line-height:11px;color:#212529;transform:translateX(-50%)">25</div>
<div class="a" style="left:1282.70px;top:663.19px;font-size:11px;line-height:11px;color:#212529;transform:translateX(-50%)">26</div>
<div class="a" style="left:1305.40px;top:663.19px;font-size:11px;line-height:11px;color:#212529;transform:translateX(-50%)">27</div>
<div class="a" style="left:1328.20px;top:663.19px;font-size:11px;line-height:11px;color:#212529;transform:translateX(-50%)">28</div>
<div class="a" style="left:1318px;top:683px;width:21px;height:23.799999999999955px;background:#d8b8b9"></div>
<div class="a" style="left:1164.70px;top:689.89px;font-size:11px;line-height:11px;color:#212529;transform:translateX(-50%)">40</div>
<div class="a" style="left:1189.70px;top:689.89px;font-size:11px;line-height:11px;color:#212529;transform:translateX(-50%)">29</div>
<div class="a" style="left:1214.00px;top:689.89px;font-size:11px;line-height:11px;color:#212529;transform:translateX(-50%)">30</div>
<div class="a" style="left:1237.20px;top:689.89px;font-size:11px;line-height:11px;color:#9a9a9a;transform:translateX(-50%)">1</div>
<div class="a" style="left:1260.00px;top:689.89px;font-size:11px;line-height:11px;color:#9a9a9a;transform:translateX(-50%)">2</div>
<div class="a" style="left:1282.70px;top:689.89px;font-size:11px;line-height:11px;color:#9a9a9a;transform:translateX(-50%)">3</div>
<div class="a" style="left:1305.40px;top:689.89px;font-size:11px;line-height:11px;color:#9a9a9a;transform:translateX(-50%)">4</div>
<div class="a" style="left:1328.20px;top:689.89px;font-size:11px;line-height:11px;color:#9a9a9a;transform:translateX(-50%)">5</div>
<div class="a" style="left:1247.00px;top:760.19px;font-size:11px;line-height:11px;color:#212529;transform:translateX(-50%)">Lokakuu 2025</div>
<div class="a" style="left:1189.70px;top:786.89px;font-size:11px;line-height:11px;color:#212529;transform:translateX(-50%)">Ma</div>
<div class="a" style="left:1214.00px;top:786.89px;font-size:11px;line-height:11px;color:#212529;transform:translateX(-50%)">Ti</div>
<div class="a" style="left:1237.20px;top:786.89px;font-size:11px;line-height:11px;color:#212529;transform:translateX(-50%)">Ke</div>
<div class="a" style="left:1260.00px;top:786.89px;font-size:11px;line-height:11px;color:#212529;transform:translateX(-50%)">To</div>
<div class="a" style="left:1282.70px;top:786.89px;font-size:11px;line-height:11px;color:#212529;transform:translateX(-50%)">Pe</div>
<div class="a" style="left:1305.40px;top:786.89px;font-size:11px;line-height:11px;color:#212529;transform:translateX(-50%)">La</div>
<div class="a" style="left:1328.20px;top:786.89px;font-size:11px;line-height:11px;color:#212529;transform:translateX(-50%)">Su</div>
<div class="a" style="left:1318px;top:806.2px;width:21px;height:24.5px;background:#d8b8b9"></div>
<div class="a" style="left:1164.70px;top:812.79px;font-size:11px;line-height:11px;color:#212529;transform:translateX(-50%)">40</div>
<div class="a" style="left:1189.70px;top:812.79px;font-size:11px;line-height:11px;color:#9a9a9a;transform:translateX(-50%)">29</div>
<div class="a" style="left:1214.00px;top:812.79px;font-size:11px;line-height:11px;color:#9a9a9a;transform:translateX(-50%)">30</div>
<div class="a" style="left:1237.20px;top:812.79px;font-size:11px;line-height:11px;color:#212529;transform:translateX(-50%)">1</div>
<div class="a" style="left:1260.00px;top:812.79px;font-size:11px;line-height:11px;color:#212529;transform:translateX(-50%)">2</div>
<div class="a" style="left:1282.70px;top:812.79px;font-size:11px;line-height:11px;color:#212529;transform:translateX(-50%)">3</div>
<div class="a" style="left:1305.40px;top:812.79px;font-size:11px;line-height:11px;color:#212529;transform:translateX(-50%)">4</div>
<div class="a" style="left:1328.20px;top:812.79px;font-size:11px;line-height:11px;color:#212529;transform:translateX(-50%)">5</div>
<div class="a" style="left:1318px;top:833px;width:21px;height:24px;background:#d8b8b9"></div>
<div class="a" style="left:1164.70px;top:839.19px;font-size:11px;line-height:11px;color:#212529;transform:translateX(-50%)">41</div>
<div class="a" style="left:1189.70px;top:839.19px;font-size:11px;line-height:11px;color:#212529;transform:translateX(-50%)">6</div>
<div class="a" style="left:1214.00px;top:839.19px;font-size:11px;line-height:11px;color:#212529;transform:translateX(-50%)">7</div>
<div class="a" style="left:1237.20px;top:839.19px;font-size:11px;line-height:11px;color:#212529;transform:translateX(-50%)">8</div>
<div class="a" style="left:1260.00px;top:839.19px;font-size:11px;line-height:11px;color:#212529;transform:translateX(-50%)">9</div>
<div class="a" style="left:1282.70px;top:839.19px;font-size:11px;line-height:11px;color:#212529;transform:translateX(-50%)">10</div>
<div class="a" style="left:1305.40px;top:839.19px;font-size:11px;line-height:11px;color:#212529;transform:translateX(-50%)">11</div>
<div class="a" style="left:1328.20px;top:839.19px;font-size:11px;line-height:11px;color:#212529;transform:translateX(-50%)">12</div>
<div class="a" style="left:1349px;top:236px;width:15px;height:598px;background:#f8f8f8"></div>
<svg class="a" style="left:1352px;top:241px;" width="9" height="7" viewBox="0 0 9 7"><path d="M4.5 0.5 L8.6 6.5 L0.4 6.5Z" fill="#888" stroke="#888" stroke-width="0.8" stroke-linejoin="round"/></svg>
<div class="a" style="left:1352px;top:254px;width:9px;height:447px;background:#8a8a8a;border-radius:4.5px"></div>
</body></html>
